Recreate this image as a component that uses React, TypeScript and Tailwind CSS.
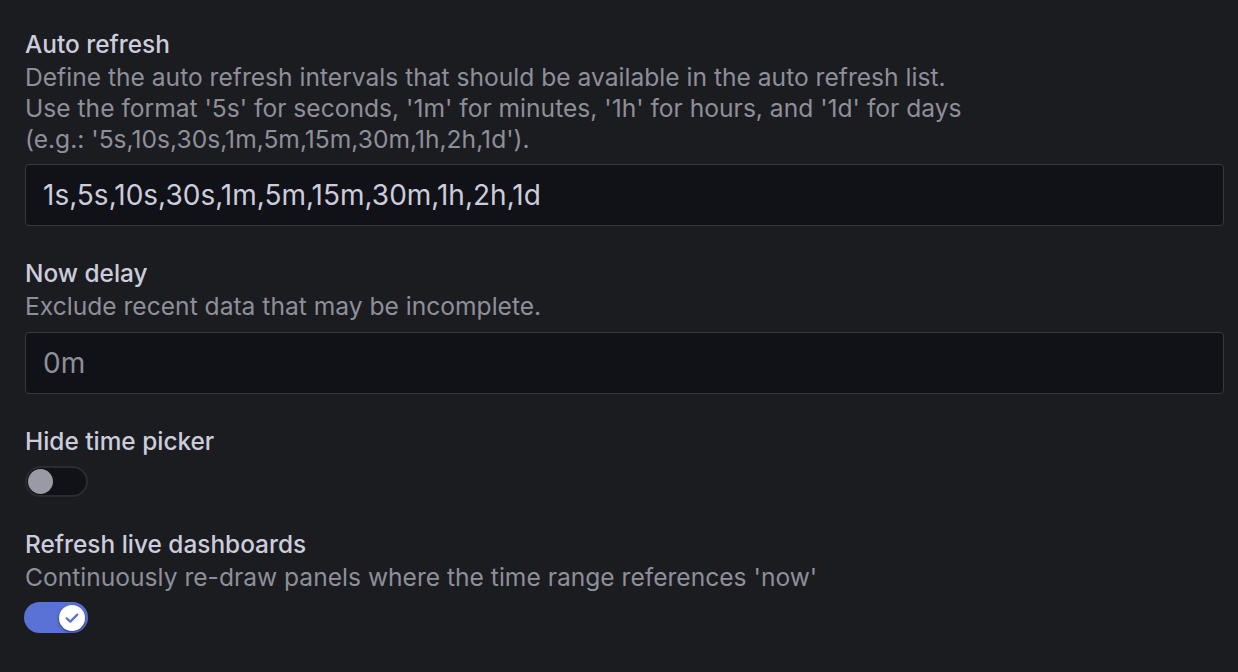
import React from "react";

const font = { fontFamily: "Inter, 'Noto Sans', sans-serif" };

function Label({ children }: { children: React.ReactNode }) {
  return <div className="text-[24.4px] font-medium leading-[31px] text-[#ccccdc] mb-[2px]">{children}</div>;
}

function Desc({ children }: { children: React.ReactNode }) {
  return <div className="text-[24.6px] leading-[31px] text-[#8e8f99]">{children}</div>;
}

function Input({ value, muted, second }: { value: string; muted?: boolean; second?: boolean }) {
  return (
    <div
      className={`${second ? "mt-[10px]" : "mt-[9px]"} h-[62px] w-[1199px] rounded-[4px] border border-[#37383e] bg-[#111217] flex items-center pl-[17px]`}
    >
      <span className={`text-[28px] ${muted ? "text-[#8e8f99]" : "text-[#ccccdc]"}`}>{value}</span>
    </div>
  );
}

export default function App() {
  return (
    <div style={font} className="w-full h-[672px] bg-[#1b1c20] pl-[25px] pt-[29px] flex flex-col gap-[32px]">
      <div>
        <Label>Auto refresh</Label>
        <Desc>
          Define the auto refresh intervals that should be available in the auto refresh list.
          <br />
          Use the format '5s' for seconds, '1m' for minutes, '1h' for hours, and '1d' for days
          <br />
          (e.g.: '5s,10s,30s,1m,5m,15m,30m,1h,2h,1d').
        </Desc>
        <Input value="1s,5s,10s,30s,1m,5m,15m,30m,1h,2h,1d" />
      </div>
      <div>
        <Label>Now delay</Label>
        <Desc>Exclude recent data that may be incomplete.</Desc>
        <Input value="0m" muted second />
      </div>
      <div>
        <Label>Hide time picker</Label>
        <div className="mt-[9px] w-[63px] h-[31px] rounded-full border-2 border-[#2a2b30] bg-[#111217] flex items-center pl-[1px]">
          <div className="w-[25px] h-[25px] rounded-full bg-[#9a9aa5]" />
        </div>
      </div>
      <div>
        <Label>Refresh live dashboards</Label>
        <Desc>Continuously re-draw panels where the time range references 'now'</Desc>
        <div className="mt-[9px] -ml-px w-[64px] h-[31px] rounded-full bg-[#5a72d6] flex items-center justify-end pr-[3px]">
          <div className="w-[26px] h-[26px] rounded-full bg-white flex items-center justify-center shadow-[0_1px_3px_rgba(0,0,0,0.5)]">
            <svg width="18" height="18" viewBox="0 0 16 16" fill="none">
              <path d="M3.3 8.3 L6.5 11.2 L12.7 5" stroke="#5a72d6" strokeWidth="2" strokeLinecap="round" strokeLinejoin="round" />
            </svg>
          </div>
        </div>
      </div>
    </div>
  );
}
